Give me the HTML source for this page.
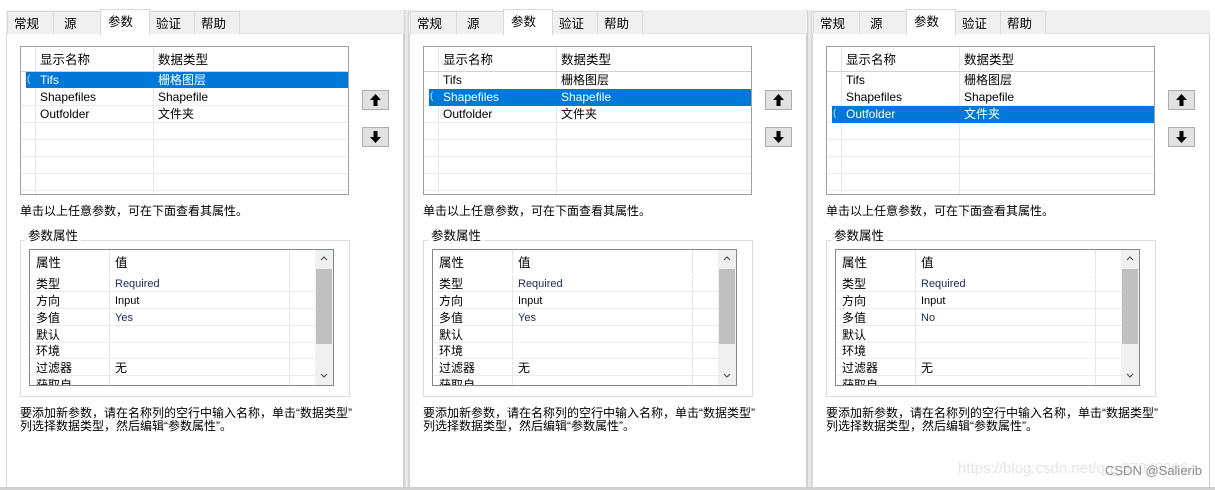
<!DOCTYPE html>
<html><head><meta charset="utf-8"><style>
*{margin:0;padding:0;box-sizing:border-box}
body{width:1215px;height:490px;background:#fff;position:relative;overflow:hidden;font-family:"Liberation Sans","Noto Sans CJK SC",sans-serif;font-size:12px;color:#000}
.p{position:absolute;top:0;width:405px;height:490px}
.a{position:absolute}
.strip{left:6px;top:10px;width:398px;height:24px;background:#f0f0f0;border-bottom:1px solid #e3e3e3}
.tab{top:11px;height:23px;border:1px solid #d9d9d9;background:#f0f0f0;font-size:12.5px;padding:1px 0 0 6px;border-bottom:none}
.tab.s{top:9px;height:26px;background:#fff;border-color:#d9d9d9;padding-top:1px;padding-left:7px}
.content{left:6px;top:34px;width:398px;height:454px;border-left:1px solid #d9d9d9;border-right:1px solid #cfcfcf;border-bottom:1px solid #cfcfcf;background:#fff}
.grid{left:20px;top:46px;width:329px;height:149px;border:1px solid #a0a0a0;background:#fff}
.hl{position:absolute;left:0;right:0;height:1px;background:#ececec}
.vl{position:absolute;top:0;bottom:0;width:1px;background:#e6e6e6}
.sel{background:#0078d7;color:#fff}
.btn{width:27px;height:20px;background:#e1e1e1;border:1px solid #adadad}
.gb{left:20px;top:240px;width:330px;height:157px;border:1px solid #dcdcdc}
.pg{left:29px;top:249px;width:305px;height:137px;border:1px solid #828790;background:#fff;overflow:hidden}
.t{position:absolute;white-space:nowrap;line-height:16px}
</style></head><body>

<div class="a" style="left:404px;top:10px;width:5px;height:480px;background:#e8e8e8;border-left:1px solid #d0d0d0;border-right:1px solid #d6d6d6"></div>
<div class="a" style="left:807px;top:10px;width:5px;height:480px;background:#e8e8e8;border-left:1px solid #d0d0d0;border-right:1px solid #d6d6d6"></div>

<div class="p" style="left:0px">
<div class="a strip"></div>
<div class="a content"></div>
<div class="a tab" style="left:7px;width:47px">常规</div>
<div class="a tab" style="left:53px;width:48px;padding-left:10px">源</div>
<div class="a tab s" style="left:100px;width:50px">参数</div>
<div class="a tab" style="left:149px;width:46px">验证</div>
<div class="a tab" style="left:194px;width:46px">帮助</div>
<div class="a grid">
 <div class="vl" style="left:14px"></div><div class="vl" style="left:132px"></div>
 <div class="hl" style="top:24px;background:#d0d0d0"></div>
 <div class="hl" style="top:58px"></div><div class="hl" style="top:75px"></div><div class="hl" style="top:92px"></div><div class="hl" style="top:109px"></div><div class="hl" style="top:126px"></div><div class="hl" style="top:143px"></div>
 <div class="t" style="left:19px;top:5px;font-size:12.5px">显示名称</div><div class="t" style="left:137px;top:5px;font-size:12.5px">数据类型</div>
 <div class="a sel" style="left:5px;top:25px;width:322px;height:16px"></div>
 <div class="t" style="left:6px;top:25px;color:#cfe3f7;font-size:10px">(</div>
 <div class="t" style="left:19px;top:25px;color:#fff">Tifs</div><div class="t" style="left:137px;top:25px;color:#fff">栅格图层</div>
 <div class="t" style="left:19px;top:42px">Shapefiles</div><div class="t" style="left:137px;top:42px">Shapefile</div>
 <div class="t" style="left:19px;top:59px">Outfolder</div><div class="t" style="left:137px;top:59px">文件夹</div>
</div>
<div class="a btn" style="left:362px;top:90px"><svg width="25" height="18"><path d="M12.5 3 L7 9 H10.5 V15 H14.5 V9 H18 Z" fill="#000"/></svg></div>
<div class="a btn" style="left:362px;top:127px"><svg width="25" height="18"><path d="M12.5 15 L7 9 H10.5 V3 H14.5 V9 H18 Z" fill="#000"/></svg></div>
<div class="t" style="left:20px;top:203px">单击以上任意参数，可在下面查看其属性。</div>
<div class="a gb"></div>
<div class="t" style="left:25px;top:228px;background:#fff;padding:0 3px;font-size:12.5px">参数属性</div>
<div class="a pg">
 <div class="vl" style="left:79px"></div><div class="vl" style="left:259px"></div>
 <div class="hl" style="top:24px;background:#fff"></div>
 <div class="hl" style="top:41px"></div><div class="hl" style="top:58px"></div><div class="hl" style="top:75px"></div><div class="hl" style="top:92px"></div><div class="hl" style="top:108px"></div><div class="hl" style="top:125px"></div>
 <div class="t" style="left:6px;top:5px;font-size:12.5px">属性</div><div class="t" style="left:85px;top:5px;font-size:12.5px">值</div>
 <div class="t" style="left:6px;top:26px">类型</div><div class="t" style="left:85px;top:26px;font-size:11px;color:#1a2a5a">Required</div>
 <div class="t" style="left:6px;top:43px">方向</div><div class="t" style="left:85px;top:43px;font-size:11px">Input</div>
 <div class="t" style="left:6px;top:60px">多值</div><div class="t yn" style="left:85px;top:60px;font-size:11px;color:#1a2a5a">Yes</div>
 <div class="t" style="left:6px;top:77px">默认</div>
 <div class="t" style="left:6px;top:93px">环境</div>
 <div class="t" style="left:6px;top:110px">过滤器</div><div class="t" style="left:85px;top:110px">无</div>
 <div class="t" style="left:6px;top:127px">获取自</div>
 <div class="a" style="left:285px;top:0;width:18px;height:135px;background:#f0f0f0"></div>
 <div class="a" style="left:286px;top:19px;width:16px;height:75px;background:#c0c0c0"></div>
 <svg class="a" style="left:285px;top:0" width="18" height="135"><path d="M6 10 L9 7 L12 10" stroke="#555" fill="none" stroke-width="1.2"/><path d="M6 124 L9 127 L12 124" stroke="#555" fill="none" stroke-width="1.2"/></svg>
</div>
<div class="t" style="left:20px;top:407px;line-height:13px">要添加新参数，请在名称列的空行中输入名称，单击“数据类型”<br>列选择数据类型，然后编辑“参数属性”。</div>
</div>

<script>
var src=document.querySelector('.p');
var c2=src.cloneNode(true);c2.style.left='403px';document.body.appendChild(c2);
var c3=src.cloneNode(true);c3.style.left='806px';document.body.appendChild(c3);
function moveSel(p,row){
 var g=p.querySelector('.grid');var ts=g.querySelectorAll('.t');
 var sel=g.querySelector('.sel');var mark=ts[2];
 var top=25+17*row;sel.style.top=top+'px';sel.style.height=(row?17:16)+'px';mark.style.top=top+'px';
 for(var i=3;i<ts.length;i++){var r=Math.round((parseInt(ts[i].style.top)-25)/17);ts[i].style.color=(r==row)?'#fff':'#000';}
}
moveSel(c2,1);moveSel(c3,2);
c3.querySelector('.yn').textContent='No';
</script>
<div class="a" style="left:0;top:487px;width:1215px;height:3px;background:#d0d0d0"></div>
<div class="t" style="left:958px;top:461px;font-size:15px;color:#e4e4e4">https://blog.csdn.net/qq_37943966</div>
<div class="t" style="left:1105px;top:463px;font-size:13px;color:#8a8a8a">CSDN @Salierib</div>
</body></html>
